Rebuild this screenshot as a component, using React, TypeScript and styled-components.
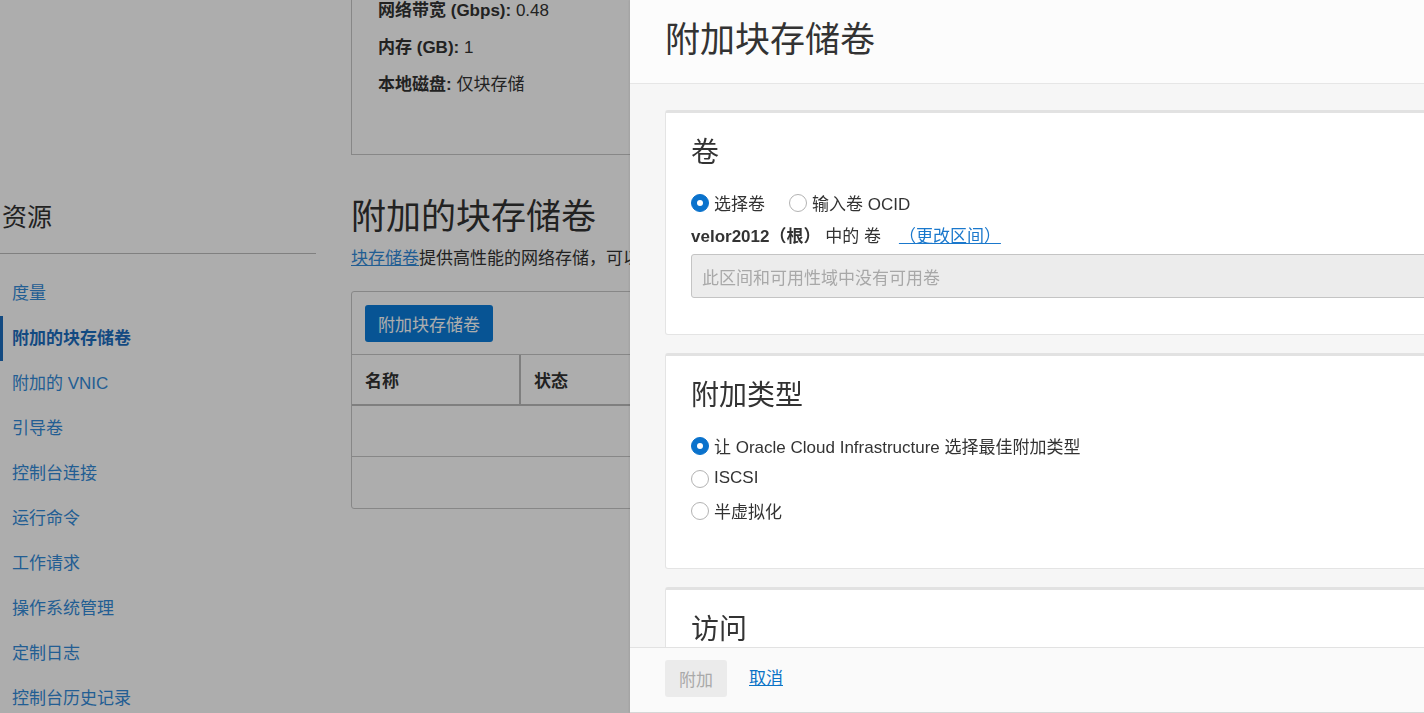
import React from "react";
import styled, { createGlobalStyle } from "styled-components";

const FONT = `"Liberation Sans", Arial, "Noto Sans CJK SC", sans-serif`;

const Global = createGlobalStyle`
  html, body { margin: 0; padding: 0; }
  body {
    font-family: ${FONT};
    font-size: 17px;
    color: #333;
    background: #fff;
    overflow: hidden;
  }
  #root { height: 713px; overflow: hidden; }
  * { box-sizing: border-box; }
`;

/* ---------- background page ---------- */

const Page = styled.div`
  display: flex;
  height: 713px;
  overflow: hidden;
  background: #fff;
`;

const Sidebar = styled.aside`
  width: 316px;
  flex: none;
  padding-top: 201px;
`;

const SideTitle = styled.h2`
  margin: 0 0 20px 2px;
  font-size: 25px;
  font-weight: 400;
  line-height: 32px;
  color: #333;
`;

const SideRule = styled.hr`
  margin: 0;
  border: none;
  border-top: 1px solid #bdbdbd;
`;

const NavList = styled.ul`
  list-style: none;
  margin: 17px 0 0;
  padding: 0;
`;

const NavItem = styled.li<{ $active?: boolean }>`
  height: 45px;
  line-height: 45px;
  padding-left: ${(p) => (p.$active ? "9px" : "12px")};
  border-left: ${(p) => (p.$active ? "3px solid #1d6ebf" : "none")};
  font-size: 17px;
  font-weight: ${(p) => (p.$active ? 700 : 400)};
  color: ${(p) => (p.$active ? "#1d6ebf" : "#338bd9")};
  white-space: nowrap;
`;

const Main = styled.main`
  margin-left: 35px;
  width: 1000px;
  flex: none;
`;

const InfoBox = styled.div`
  margin-top: -40px;
  padding: 38px 26px 57px;
  border: 1px solid #c8c8c8;
  display: flex;
  flex-direction: column;
  gap: 13px;
`;

const InfoLine = styled.div`
  line-height: 24px;
  font-size: 17px;
  color: #333;
  b { font-weight: 700; }
`;

const PageTitle = styled.h1`
  margin: 40px 0 7px;
  font-size: 35px;
  line-height: 44px;
  font-weight: 400;
  color: #333;
`;

const Desc = styled.p`
  margin: 0 0 19px;
  line-height: 26px;
  font-size: 17px;
  color: #333;
  white-space: nowrap;
  a { color: #338bd9; text-decoration: underline; }
`;

const TableCard = styled.div`
  border: 1px solid #c8c8c8;
  border-radius: 3px;
`;

const TableToolbar = styled.div`
  padding: 13px 13px 12px;
`;

const PrimaryBtn = styled.button`
  height: 37px;
  padding: 0 13px;
  border: none;
  border-radius: 3px;
  background: #0b7ddb;
  color: #fff;
  font-family: ${FONT};
  font-size: 17px;
`;

const Row = styled.div<{ $head?: boolean }>`
  display: grid;
  grid-template-columns: 167px 1fr;
  height: ${(p) => (p.$head ? "52px" : "51px")};
  border-top: ${(p) => (p.$head ? "1px solid #c8c8c8" : "none")};
  border-bottom: ${(p) => (p.$head ? "2px solid #bcbcbc" : "1px solid #c8c8c8")};
  &:last-child { border-bottom: none; }
`;

const HeadCell = styled.div`
  padding-left: 13px;
  display: flex;
  align-items: center;
  font-weight: 700;
  font-size: 17px;
  color: #333;
  & + & { border-left: 2px solid #bcbcbc; }
`;

const Cell = styled.div``;

const Backdrop = styled.div`
  position: fixed;
  inset: 0;
  background: rgba(0, 0, 0, 0.32);
`;

/* ---------- drawer ---------- */

const Drawer = styled.section`
  position: fixed;
  top: 0;
  left: 630px;
  width: 900px;
  height: 713px;
  background: #f6f6f6;
  display: flex;
  flex-direction: column;
  box-shadow: -1px 0 2px rgba(0, 0, 0, 0.08);
`;

const DrawerHeader = styled.header`
  height: 84px;
  flex: none;
  background: #fcfcfc;
  border-bottom: 1px solid #e6e6e6;
  padding: 18px 35px 0;
`;

const DrawerTitle = styled.h1`
  margin: 0;
  font-size: 35px;
  line-height: 44px;
  font-weight: 400;
  color: #333;
`;

const DrawerBody = styled.div`
  flex: 1;
  overflow: hidden;
  padding: 26px 35px 0;
  display: flex;
  flex-direction: column;
  gap: 18px;
`;

const Card = styled.div`
  background: #fff;
  border: 1px solid #e4e4e4;
  border-top: 3px solid #e2e2e2;
  border-radius: 3px;
  padding: 22px 25px 36px;
  flex: none;
`;

const CardTitle = styled.h2`
  margin: 0;
  font-size: 28px;
  line-height: 36px;
  font-weight: 400;
  color: #333;
`;

const RadioGroup = styled.div<{ $inline?: boolean; $extra?: number }>`
  display: flex;
  flex-direction: ${(p) => (p.$inline ? "row" : "column")};
  gap: ${(p) => (p.$inline ? "24px" : "8.5px")};
  margin-top: 19px;
  margin-bottom: ${(p) => p.$extra ?? 0}px;
`;

const RadioLabel = styled.label`
  display: flex;
  align-items: center;
  gap: 5px;
  height: 24px;
  font-size: 17px;
  color: #333;
  white-space: nowrap;
`;

const RadioDot = styled.span<{ $checked?: boolean }>`
  width: 18px;
  height: 18px;
  border-radius: 50%;
  flex: none;
  margin-top: 2px;
  background: ${(p) => (p.$checked ? "#0a72cc" : "#fff")};
  border: 1px solid ${(p) => (p.$checked ? "#0a72cc" : "#b3b3b3")};
  display: flex;
  align-items: center;
  justify-content: center;
  &::after {
    content: "";
    width: 6px;
    height: 6px;
    border-radius: 50%;
    background: #fff;
    display: ${(p) => (p.$checked ? "block" : "none")};
  }
`;

const ScopeLine = styled.div`
  margin-top: 11px;
  line-height: 24px;
  font-size: 17px;
  color: #333;
  white-space: nowrap;
  b { font-weight: 700; }
`;

const Link = styled.a`
  color: #1a78cc;
  text-decoration: underline;
  cursor: pointer;
`;

const ScopeLink = styled(Link)`
  margin-left: 18px;
`;

const SelectBox = styled.div`
  margin-top: 5px;
  height: 44px;
  border: 1px solid #c4c4c4;
  border-radius: 3px;
  background: #ececec;
  padding-left: 10px;
  display: flex;
  align-items: center;
  color: #a8a8a8;
  font-size: 17px;
  margin-right: -100px;
`;

const Footer = styled.footer`
  height: 66px;
  flex: none;
  background: #fafafa;
  border-top: 1px solid #e2e2e2;
  border-bottom: 1px solid #d6d6d6;
  padding: 12px 35px 0;
  display: flex;
  align-items: flex-start;
  gap: 22px;
`;

const DisabledBtn = styled.button`
  height: 37px;
  width: 62px;
  border: none;
  border-radius: 3px;
  background: #ebebeb;
  color: #a9a9a9;
  font-family: ${FONT};
  font-size: 17px;
`;

const CancelLink = styled(Link)`
  line-height: 37px;
  font-size: 17px;
  color: #0b73c6;
`;

const navItems = [
  "度量",
  "附加的块存储卷",
  "附加的 VNIC",
  "引导卷",
  "控制台连接",
  "运行命令",
  "工作请求",
  "操作系统管理",
  "定制日志",
  "控制台历史记录",
];

export default function App() {
  return (
    <>
      <Global />
      <Page>
        <Sidebar>
          <SideTitle>资源</SideTitle>
          <SideRule />
          <NavList>
            {navItems.map((n) => (
              <NavItem key={n} $active={n === "附加的块存储卷"}>
                {n}
              </NavItem>
            ))}
          </NavList>
        </Sidebar>
        <Main>
          <InfoBox>
            <InfoLine>
              <b>网络带宽 (Gbps):</b> 0.48
            </InfoLine>
            <InfoLine>
              <b>内存 (GB):</b> 1
            </InfoLine>
            <InfoLine>
              <b>本地磁盘:</b> 仅块存储
            </InfoLine>
          </InfoBox>
          <PageTitle>附加的块存储卷</PageTitle>
          <Desc>
            <a>块存储卷</a>提供高性能的网络存储，可以附加到实例。
          </Desc>
          <TableCard>
            <TableToolbar>
              <PrimaryBtn>附加块存储卷</PrimaryBtn>
            </TableToolbar>
            <Row $head>
              <HeadCell>名称</HeadCell>
              <HeadCell>状态</HeadCell>
            </Row>
            <Row>
              <Cell />
              <Cell />
            </Row>
            <Row>
              <Cell />
              <Cell />
            </Row>
          </TableCard>
        </Main>
      </Page>
      <Backdrop />
      <Drawer>
        <DrawerHeader>
          <DrawerTitle>附加块存储卷</DrawerTitle>
        </DrawerHeader>
        <DrawerBody>
          <Card>
            <CardTitle>卷</CardTitle>
            <RadioGroup $inline>
              <RadioLabel>
                <RadioDot $checked />
                选择卷
              </RadioLabel>
              <RadioLabel>
                <RadioDot />
                输入卷 OCID
              </RadioLabel>
            </RadioGroup>
            <ScopeLine>
              <b>velor2012（根）</b> 中的 卷<ScopeLink>（更改区间）</ScopeLink>
            </ScopeLine>
            <SelectBox>此区间和可用性域中没有可用卷</SelectBox>
          </Card>
          <Card>
            <CardTitle>附加类型</CardTitle>
            <RadioGroup $extra={10}>
              <RadioLabel>
                <RadioDot $checked />
                让 Oracle Cloud Infrastructure 选择最佳附加类型
              </RadioLabel>
              <RadioLabel>
                <RadioDot />
                ISCSI
              </RadioLabel>
              <RadioLabel>
                <RadioDot />
                半虚拟化
              </RadioLabel>
            </RadioGroup>
          </Card>
          <Card>
            <CardTitle>访问</CardTitle>
          </Card>
        </DrawerBody>
        <Footer>
          <DisabledBtn>附加</DisabledBtn>
          <CancelLink>取消</CancelLink>
        </Footer>
      </Drawer>
    </>
  );
}
